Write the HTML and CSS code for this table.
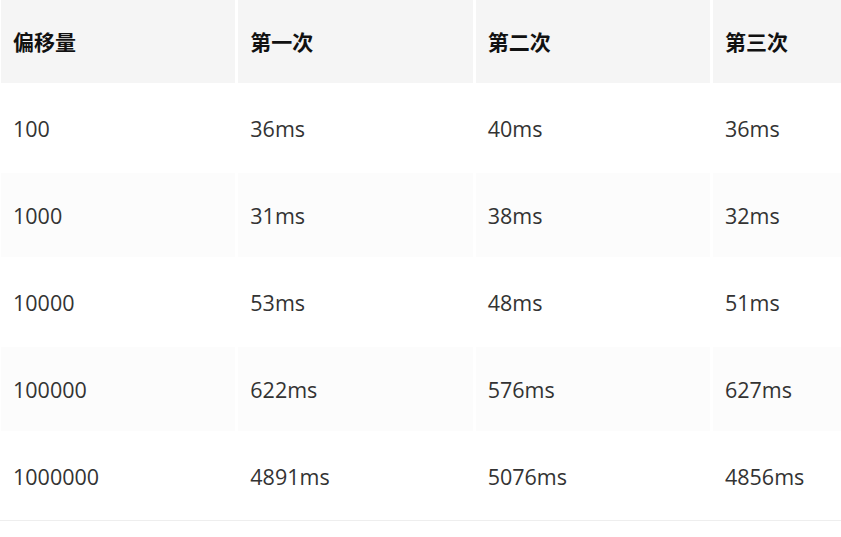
FILE: index.html
```html
<!DOCTYPE html>
<html lang="zh">
<head>
<meta charset="utf-8">
<title>偏移量</title>
<link rel="stylesheet" href="styles.css">
</head>
<body>
<div class="sheet">
  <div class="grid">
    <div class="cell head">偏移量</div>
    <div class="cell head">第一次</div>
    <div class="cell head">第二次</div>
    <div class="cell head">第三次</div>

    <div class="cell">100</div>
    <div class="cell">36ms</div>
    <div class="cell">40ms</div>
    <div class="cell">36ms</div>

    <div class="cell alt">1000</div>
    <div class="cell alt">31ms</div>
    <div class="cell alt">38ms</div>
    <div class="cell alt">32ms</div>

    <div class="cell">10000</div>
    <div class="cell">53ms</div>
    <div class="cell">48ms</div>
    <div class="cell">51ms</div>

    <div class="cell alt">100000</div>
    <div class="cell alt">622ms</div>
    <div class="cell alt">576ms</div>
    <div class="cell alt">627ms</div>

    <div class="cell">1000000</div>
    <div class="cell">4891ms</div>
    <div class="cell">5076ms</div>
    <div class="cell">4856ms</div>
  </div>
  <div class="rule"></div>
</div>
</body>
</html>
```

FILE: styles.css
```css
html, body {
  margin: 0;
  padding: 0;
  background: #ffffff;
  overflow: hidden;
}
body {
  width: 841px;
  height: 537px;
  font-family: "Open Sans", "Noto Sans CJK SC", sans-serif;
  font-size: 21.5px;
  color: #333333;
}
.sheet {
  width: 841px;
  margin-top: -1px;
}
.grid {
  display: grid;
  grid-template-columns: 234.33px 234.33px 234.33px 1fr;
  grid-auto-rows: 84px;
  column-gap: 3px;
  row-gap: 3px;
  padding-left: 1px;
}
.cell {
  display: flex;
  align-items: center;
  padding-left: 12px;
  min-width: 0;
  white-space: nowrap;
  background: #ffffff;
}
.cell.head {
  background: #f5f5f5;
  font-family: "Noto Sans CJK SC", sans-serif;
  font-size: 21px;
  font-weight: 700;
  color: #111111;
}
.cell.alt {
  background: #fcfcfc;
}
.rule {
  height: 1px;
  margin-top: 2px;
  background: #eeeeee;
}
```
